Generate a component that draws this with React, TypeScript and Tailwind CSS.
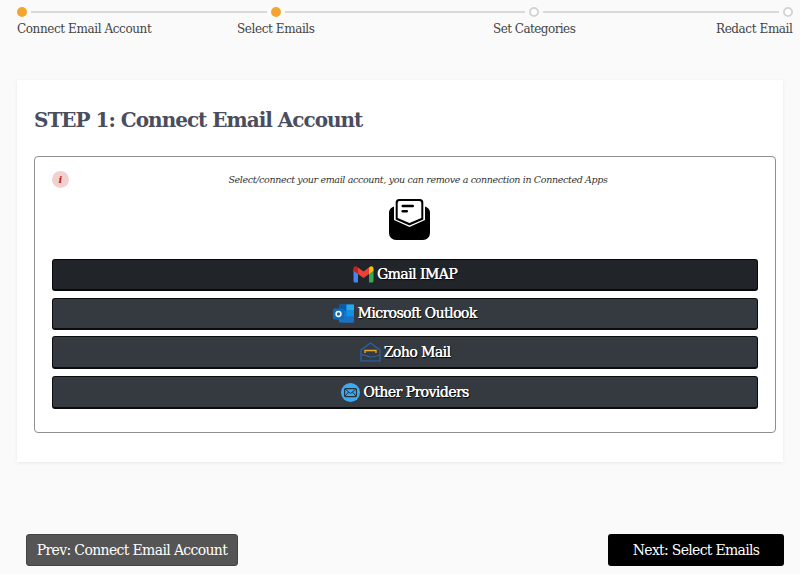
const serif = 'font-["DejaVu_Serif","Liberation_Serif",serif]';

function GmailIcon() {
  return (
    <svg width="21" height="17" viewBox="0 0 21 17" className="shrink-0">
      <path d="M0.5 15V3.2L5 6.4V16.5H2A1.5 1.5 0 0 1 0.5 15Z" fill="#4285f4" />
      <path d="M20.5 15V3.2L16 6.4V16.5H19A1.5 1.5 0 0 0 20.5 15Z" fill="#34a853" />
      <path d="M16 1.6V8L20.5 4.8V2.4C20.5 0.6 18.5 -0.3 17.2 0.7Z" fill="#fbbc04" />
      <path d="M5 1.6V8L10.5 12L16 8V1.6L10.5 5.6Z" fill="#ea4335" />
      <path d="M0.5 2.4V4.8L5 8V1.6L3.8 0.7C2.5 -0.3 0.5 0.6 0.5 2.4Z" fill="#c5221f" />
    </svg>
  );
}

function OutlookIcon() {
  return (
    <svg width="21" height="19" viewBox="0 0 21 19" className="shrink-0">
      <rect x="6" y="0.5" width="15" height="18" rx="1.5" fill="#0f78d4" />
      <rect x="6" y="0.5" width="7.5" height="6" fill="#0a5cab" />
      <rect x="13.5" y="0.5" width="7.5" height="6" fill="#29a8ea" />
      <rect x="13.5" y="6.5" width="7.5" height="6" fill="#1490df" />
      <path d="M8 12.5H21V17A1.5 1.5 0 0 1 19.5 18.5H9.5Z" fill="#1d6fc4" />
      <rect x="0" y="4.5" width="11" height="11" rx="1.5" fill="#0f6cbd" />
      <circle cx="5.5" cy="10" r="2.4" fill="none" stroke="#fff" strokeWidth="1.5" />
    </svg>
  );
}

function ZohoIcon() {
  return (
    <svg width="21" height="20" viewBox="0 0 21 20" fill="none" className="shrink-0">
      <path d="M1 8L10.5 1L20 8V19H1Z" stroke="#2a64ad" strokeWidth="1.2" strokeLinejoin="round" />
      <path d="M1 13C5 12 7 15 10.5 15C14 15 16 14.5 20 13" stroke="#2a64ad" strokeWidth="1.2" />
      <path d="M5 11V8.5H16V11" stroke="#e8a628" strokeWidth="1.4" />
    </svg>
  );
}

function EnvelopeIcon() {
  return (
    <svg width="19" height="19" viewBox="0 0 19 19" className="shrink-0">
      <circle cx="9.5" cy="9.5" r="9.5" fill="#3fa9ef" />
      <rect x="3.6" y="5.6" width="11.8" height="8" rx="1" fill="none" stroke="#263238" strokeWidth="1.1" />
      <path d="M4 6L9.5 10.5L15 6M4 13.2L7.6 9M15 13.2L11.4 9" fill="none" stroke="#263238" strokeWidth="1" />
    </svg>
  );
}

function InboxIcon() {
  return (
    <svg width="41" height="41" viewBox="0 0 41 41">
      {/* envelope body with side flaps */}
      <path d="M5 7.5V21L20.5 28L36 21V7.5C39 8.5 41 10.5 41 13.5V34A7 7 0 0 1 34 41H7A7 7 0 0 1 0 34V13.5C0 10.5 2 8.5 5 7.5Z" fill="#000" />
      {/* letter outline, then paper */}
      <path d="M6.7 3.5A3.5 3.5 0 0 1 10.2 0H30.8A3.5 3.5 0 0 1 34.3 3.5V20.5L20.5 26.5L6.7 20.5Z" fill="#000" />
      <path d="M8.7 4A2 2 0 0 1 10.7 2H30.3A2 2 0 0 1 32.3 4V19L20.5 24L8.7 19Z" fill="#fff" />
      <rect x="12.5" y="5.8" width="12.5" height="2.4" rx="1.2" fill="#000" />
      <rect x="12.5" y="11" width="6.5" height="2.4" rx="1.2" fill="#000" />
    </svg>
  );
}

function ProviderButton({ label, icon, dark, h }: { label: string; icon: React.ReactNode; dark?: boolean; h: string }) {
  return (
    <button
      className={`flex w-full items-center justify-center gap-[3px] rounded-[3px] border border-b-2 border-black/80 text-[14px] tracking-[-0.55px] text-white [text-shadow:0.3px_0_0_#fff,1px_1px_1px_#000] ${h} ${
        dark ? 'bg-[#212529]' : 'bg-[#343a40]'
      }`}
    >
      {icon}
      <span>{label}</span>
    </button>
  );
}

export default function App() {
  return (
    <div className={`relative h-[574px] w-[800px] overflow-hidden bg-[#fafafa] ${serif}`}>
      {/* Stepper */}
      <div className="flex items-center pt-[7px] pl-[17px]">
        <div className="h-[10px] w-[10px] shrink-0 rounded-full bg-[#f5a52f]" />
        <div className="mx-[4px] h-[2px] w-[236px] bg-[#d9d9d9]" />
        <div className="h-[10px] w-[10px] shrink-0 rounded-full bg-[#f5a52f]" />
        <div className="mx-[4px] h-[2px] w-[240px] bg-[#d9d9d9]" />
        <div className="h-[10px] w-[10px] shrink-0 rounded-full border-2 border-[#d4d4d4] bg-white" />
        <div className="mx-[4px] h-[2px] w-[236px] bg-[#d9d9d9]" />
        <div className="h-[10px] w-[10px] shrink-0 rounded-full border-2 border-[#d4d4d4] bg-white" />
      </div>
      <div className="mt-[3px] flex text-[12px] leading-[18px] tracking-[-0.4px] text-[#444]">
        <span className="ml-[17px] w-[220px] whitespace-nowrap">Connect Email Account</span>
        <span className="w-[256px] whitespace-nowrap">Select Emails</span>
        <span className="w-[223px] tracking-[-0.55px] whitespace-nowrap">Set Categories</span>
        <span className="whitespace-nowrap">Redact Email</span>
      </div>

      {/* Card */}
      <div className="mx-[17px] mt-[42px] h-[382px] w-[766px] bg-white px-[17px] pt-[26px] shadow-[0_1px_3px_rgba(0,0,0,0.08)]">
        <h1 className="text-[20px] leading-[28px] font-bold tracking-[-1px] text-[#4a4d5e]">STEP 1: Connect Email Account</h1>

        <div className="relative mt-[22px] h-[277px] w-[742px] rounded-[4px] border border-[#8f8f8f] px-[17px] pt-[16px]">
          <div className="absolute top-[14px] left-[17px] flex h-[17px] w-[17px] items-center justify-center rounded-full bg-[#f3d0d0] text-[10px] font-bold text-[#b3262b] italic">
            i
          </div>
          <p className="pl-[26px] text-center text-[9.5px] leading-[14px] tracking-[-0.35px] text-[#333] italic">
            Select/connect your email account, you can remove a connection in Connected Apps
          </p>
          <div className="mt-[12px] flex justify-center pl-[8px]">
            <InboxIcon />
          </div>
          <div className="mt-[19px] flex flex-col">
            <ProviderButton h="h-[32px]" dark label="Gmail IMAP" icon={<GmailIcon />} />
            <div className="mt-[7px]">
              <ProviderButton h="h-[32px]" label="Microsoft Outlook" icon={<OutlookIcon />} />
            </div>
            <div className="mt-[6px]">
              <ProviderButton h="h-[33px]" label="Zoho Mail" icon={<ZohoIcon />} />
            </div>
            <div className="mt-[7px]">
              <ProviderButton h="h-[33px]" label="Other Providers" icon={<EnvelopeIcon />} />
            </div>
          </div>
        </div>
      </div>

      {/* Footer nav */}
      <div className="mt-[72px] flex justify-between pr-[16px] pl-[26px]">
        <button className="h-[32px] w-[212px] rounded-[3px] border border-[#444] bg-[#555] text-[14px] tracking-[-0.65px] whitespace-nowrap text-white">
          Prev: Connect Email Account
        </button>
        <button className="h-[32px] w-[176px] rounded-[3px] bg-black text-[14px] tracking-[-0.7px] whitespace-nowrap text-white">
          Next: Select Emails
        </button>
      </div>
    </div>
  );
}
